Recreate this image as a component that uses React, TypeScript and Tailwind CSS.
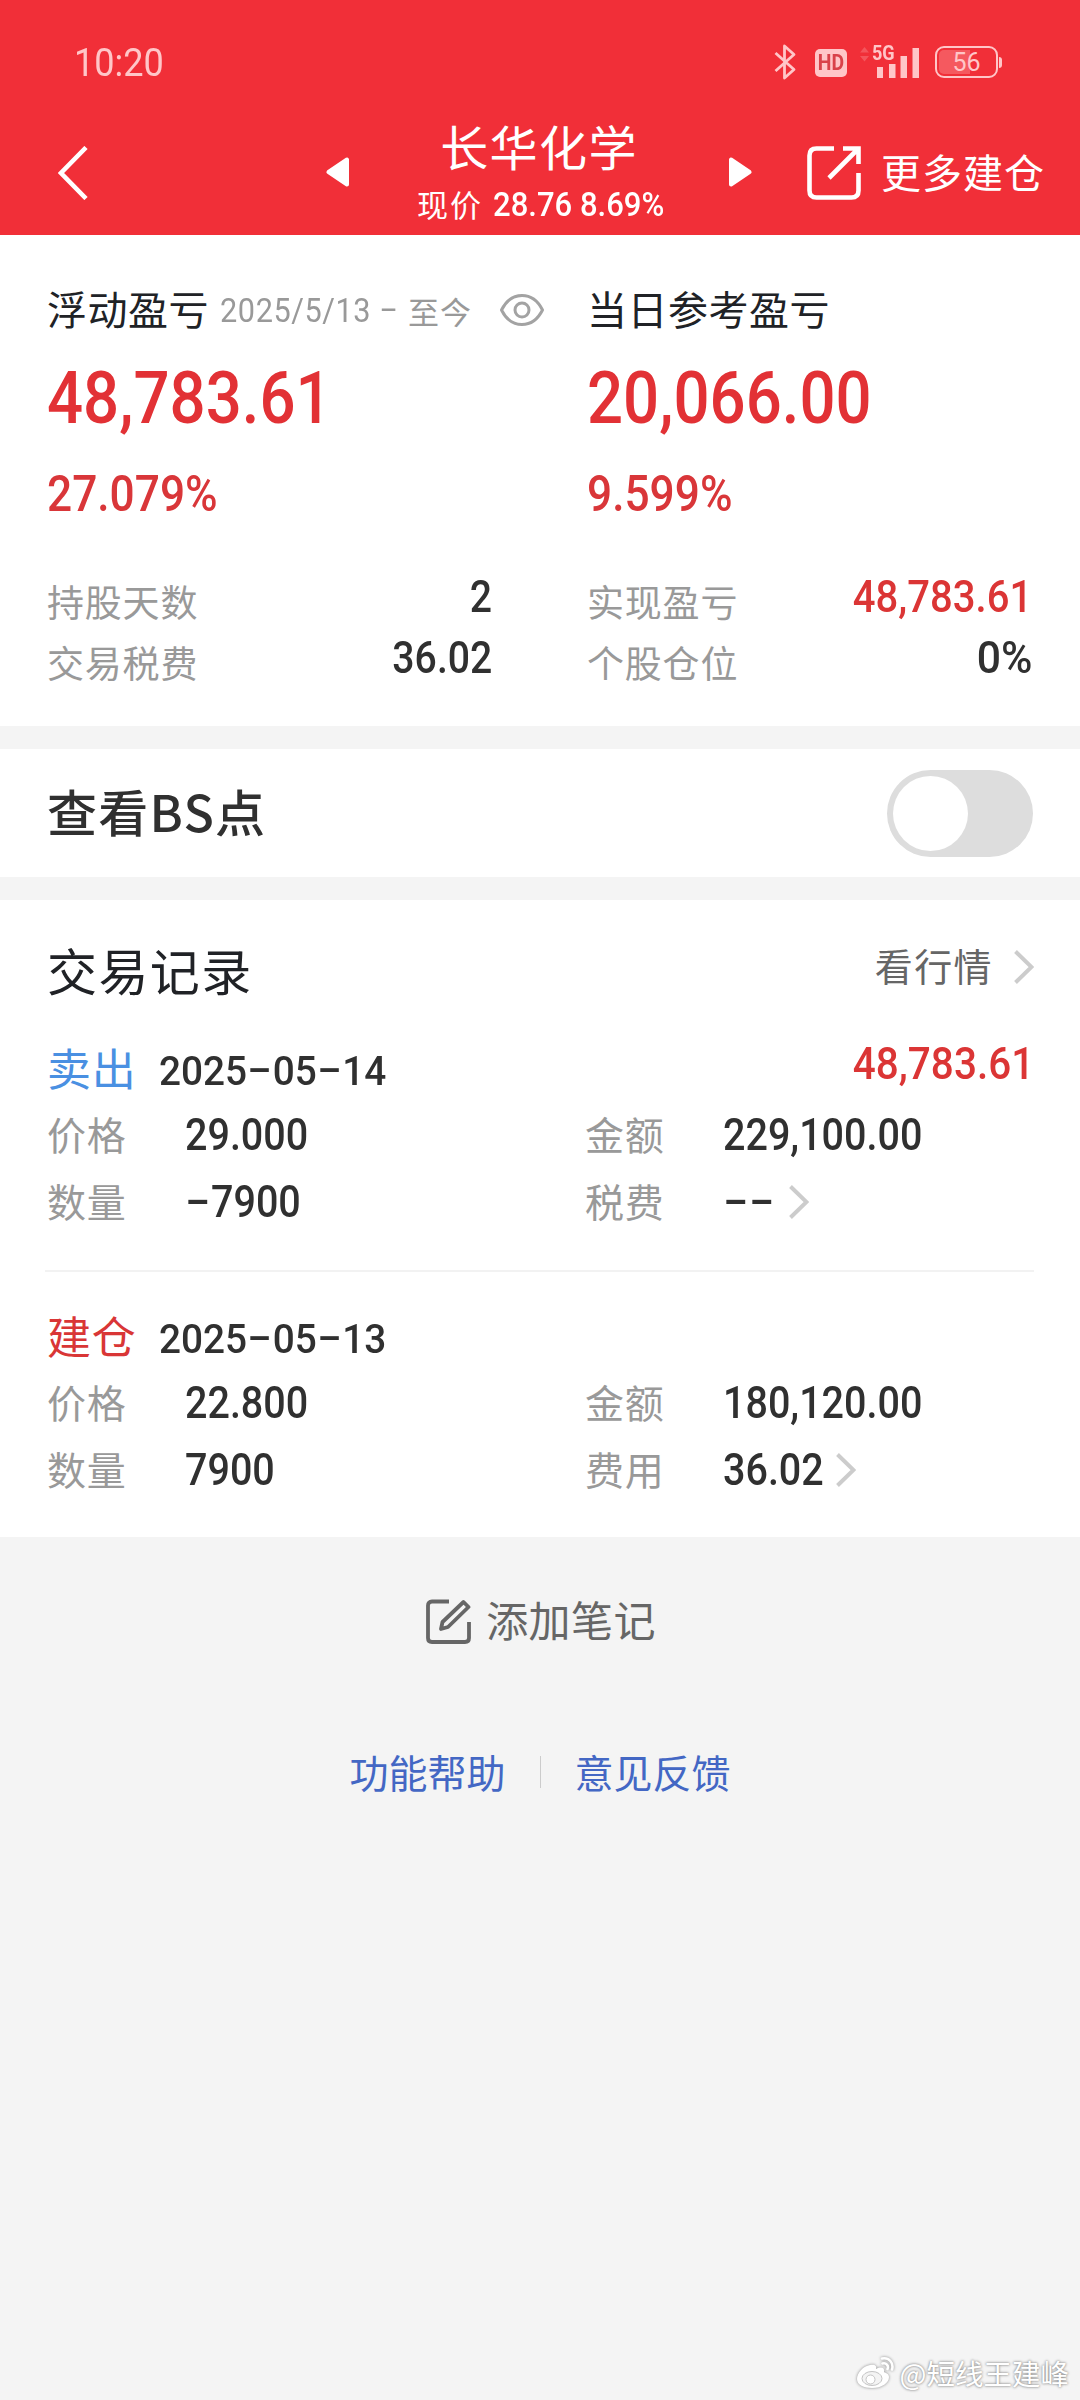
import React, { useState } from 'react';

const CJK = "font-['Noto_Sans_CJK_SC',sans-serif] whitespace-nowrap";
const NUM = "font-['Roboto','Noto_Sans_CJK_SC',sans-serif]";

interface TradeRecord {
  type: string;
  typeColor: string;
  date: string;
  profit?: string;
  price: string;
  quantity: string;
  amount: string;
  feeLabel: string;
  fee: string;
}

const records: TradeRecord[] = [
  {
    type: '卖出',
    typeColor: 'text-[#4a90e2]',
    date: '2025-05-14',
    profit: '48,783.61',
    price: '29.000',
    quantity: '-7900',
    amount: '229,100.00',
    feeLabel: '税费',
    fee: '--'
  },
  {
    type: '建仓',
    typeColor: 'text-[#d93636]',
    date: '2025-05-13',
    price: '22.800',
    quantity: '7900',
    amount: '180,120.00',
    feeLabel: '费用',
    fee: '36.02'
  }
];

// Condensed digits, with hyphens widened to a bit more than a digit
const Num = ({ text, className }: { text: string; className: string }) => (
  <span className={`${NUM} inline-block whitespace-pre leading-none ${className}`}>
    {text.split('').map((ch, i) =>
      ch === '-' ? (
        <span key={i} className="inline-block w-[0.66em] -translate-y-[0.05em] scale-x-[1.85] text-center">-</span>
      ) : (
        <React.Fragment key={i}>{ch}</React.Fragment>
      )
    )}
  </span>
);

const Chevron = () => (
  <svg className="shrink-0" width="20" height="34" viewBox="0 0 20 34" fill="none" stroke="#cccccc" strokeWidth="4">
    <path d="M1.5 1.5L17.5 17L1.5 32.5" />
  </svg>
);

const StatusBar = () => (
  <div className="flex h-[124px] items-center justify-between pl-[74px] pr-[78px] text-[#ffc6c8]">
    <span className={`${NUM} origin-left scale-x-[.95] pt-px text-[38px] leading-none`}>10:20</span>
    <div className="flex items-center">
      <svg width="22" height="36" viewBox="0 0 22 36" fill="none" stroke="currentColor" strokeWidth="2.8" strokeLinejoin="round">
        <path d="M1.5 9L20 25.5L10.5 34V2L20 10.5L1.5 27" />
      </svg>
      <span className="ml-[19px] mt-[2px] flex h-7 w-8 items-center justify-center rounded-[5px] bg-[#ffc6c8]">
        <span className={`${NUM} scale-x-[.88] text-[22px] font-bold leading-none text-[#d9424a]`}>HD</span>
      </span>
      <div className="relative ml-3 h-[34px] w-[62px]">
        <svg width="62" height="34" viewBox="0 0 62 34" fill="currentColor">
          <path d="M1 7.5L5.5 2L10 7.5ZM1 11L5.5 16.5L10 11Z" opacity=".25" />
          <rect x="18" y="22" width="6" height="11" />
          <rect x="30" y="19" width="6.5" height="14" />
          <rect x="41.5" y="11" width="6.5" height="22" />
          <rect x="53.5" y="3" width="6.5" height="30" />
        </svg>
        <span className={`${NUM} absolute left-[13px] top-[-2px] origin-left scale-x-[.86] text-[21px] font-bold leading-none`}>5G</span>
      </div>
      <div className="ml-[14px] flex items-center gap-px">
        <div className="flex h-8 w-[63px] items-center justify-center rounded-[9px] border-[2.5px] border-[#ffc6c8] bg-[linear-gradient(90deg,#f5595f_56%,transparent_56%)] bg-clip-content p-[2px]">
          <span className={`${NUM} text-[25px] leading-none`}>56</span>
        </div>
        <div className="h-[11px] w-[3px] rounded-r-sm bg-[#ffc6c8]" />
      </div>
    </div>
  </div>
);

const NavBar = () => (
  <div className="flex h-[111px] items-start text-white">
    <svg className="ml-[58px] mt-[22px]" width="30" height="54" viewBox="0 0 30 54" fill="none" stroke="currentColor" strokeWidth="4.6">
      <path d="M28 1.5L3 27L28 52.5" />
    </svg>
    <svg className="ml-[238px] mt-[33px]" width="24" height="30" viewBox="0 0 24 30" fill="currentColor" stroke="currentColor" strokeWidth="4" strokeLinejoin="round">
      <path d="M21 2.5V27.5L2.5 15Z" />
    </svg>
    <div className="flex w-[378px] flex-col items-center">
      <h1 className={`${CJK} mt-[-3px] text-[48px] leading-none tracking-[1.4px]`}>长华化学</h1>
      <div className="ml-[2px] mt-[18px] flex h-8 items-center">
        <span className={`${CJK} text-[31px] leading-none tracking-[2px]`}>现价</span>
        <Num text="28.76 8.69%" className="ml-[10px] mt-[2px] w-[170px] origin-left scale-x-[.94] text-[33px] font-medium" />
      </div>
    </div>
    <svg className="mt-[33px]" width="24" height="30" viewBox="0 0 24 30" fill="currentColor" stroke="currentColor" strokeWidth="4" strokeLinejoin="round">
      <path d="M3 2.5V27.5L21.5 15Z" />
    </svg>
    <svg className="ml-[55px] mt-[22px]" width="54" height="54" viewBox="0 0 54 54" fill="none" stroke="currentColor" strokeWidth="4.6">
      <path d="M27 2.5H9.5Q2.5 2.5 2.5 9.5V44.5Q2.5 51.5 9.5 51.5H44.5Q51.5 51.5 51.5 44.5V27" />
      <path d="M36 2.5H51.5V18M51 3L22 32" />
    </svg>
    <span className={`${CJK} ml-5 mt-[27px] text-[40px] leading-none tracking-[1px]`}>更多建仓</span>
  </div>
);

const DetailRow = ({ label, value, valueClass }: { label: string; value: string; valueClass: string }) => (
  <div className="flex h-[61px] items-center justify-between">
    <span className={`${CJK} pt-[10px] text-[37px] leading-none tracking-[0.8px] text-[#999999]`}>{label}</span>
    <Num text={value} className={`mt-px origin-right text-[44px] font-medium ${valueClass}`} />
  </div>
);

const Summary = () => (
  <section className="grid h-[491px] grid-cols-2 bg-white pt-[47px]">
    <div className="pl-[47px] pr-12">
      <div className="flex h-[52px] items-center">
        <span className={`${CJK} w-[173px] shrink-0 text-[40px] leading-none tracking-[0.5px] text-[#202226]`}>浮动盈亏</span>
        <Num text="2025/5/13 - " className="w-[188px] shrink-0 origin-left scale-x-[.93] pt-1 text-[33px] tracking-[0.6px] text-[#999999]" />
        <span className={`${CJK} pt-1 text-[31px] leading-none tracking-[1px] text-[#999999]`}>至今</span>
        <svg className="ml-[28px] mt-1 shrink-0" width="44" height="32" viewBox="0 0 44 32" fill="none" stroke="#a3a3a3" strokeWidth="3">
          <path d="M1.5 16C6 7 13 1.5 22 1.5S38 7 42.5 16C38 25 31 30.5 22 30.5S6 25 1.5 16Z" />
          <circle cx="22" cy="16" r="7" />
        </svg>
      </div>
      <div className="flex h-[128px] items-center text-[#e23135]">
        <Num text="48,783.61" className="mt-px origin-left scale-x-[.87] text-[73px] font-medium" />
      </div>
      <div className="flex h-[62px] items-center text-[#d93639]">
        <Num text="27.079%" className="mt-[2px] origin-left scale-x-[.885] text-[50px] font-medium" />
      </div>
      <div className="mt-[42px]">
        <DetailRow label="持股天数" value="2" valueClass="scale-x-[.89] text-[#303030]" />
        <DetailRow label="交易税费" value="36.02" valueClass="scale-x-[.89] text-[#303030]" />
      </div>
    </div>
    <div className="pl-[47px] pr-12">
      <div className="flex h-[52px] items-center">
        <span className={`${CJK} text-[40px] leading-none tracking-[0.5px] text-[#202226]`}>当日参考盈亏</span>
      </div>
      <div className="flex h-[128px] items-center text-[#e23135]">
        <Num text="20,066.00" className="mt-px origin-left scale-x-[.87] text-[73px] font-medium" />
      </div>
      <div className="flex h-[62px] items-center text-[#d93639]">
        <Num text="9.599%" className="mt-[2px] origin-left scale-x-[.885] text-[50px] font-medium" />
      </div>
      <div className="mt-[42px]">
        <DetailRow label="实现盈亏" value="48,783.61" valueClass="scale-x-[.91] text-[#db3535]" />
        <DetailRow label="个股仓位" value="0%" valueClass="scale-x-[.97] text-[#303030]" />
      </div>
    </div>
  </section>
);

const BsToggle = () => {
  const [enabled, setEnabled] = useState(false);

  return (
    <section className="mt-[23px] flex h-[128px] items-center justify-between bg-white px-[47px]">
      <span className={`${CJK} mt-[-6px] text-[50px] font-medium leading-none tracking-[1.3px] text-[#303030]`}>查看BS点</span>
      <button
        onClick={() => setEnabled(!enabled)}
        className={`flex h-[87px] w-[146px] items-center rounded-full px-[6px] ${enabled ? 'justify-end bg-[#f12f38]' : 'bg-[#dddddd]'}`}
      >
        <span className="h-[75px] w-[75px] rounded-full bg-white" />
      </button>
    </section>
  );
};

const Field = ({ label, value, arrow }: { label: string; value: string; arrow?: boolean }) => (
  <div className="flex items-center">
    <span className={`${CJK} w-[138px] text-[39px] leading-none tracking-[0.8px] text-[#999999]`}>{label}</span>
    <Num text={value} className="mt-[2px] origin-left scale-x-[.897] text-[44px] font-medium text-[#303030]" />
    {arrow && (
      <span className={`mt-[2px] ${value === '--' ? 'ml-2' : 'ml-px'}`}>
        <Chevron />
      </span>
    )}
  </div>
);

const RecordItem = ({ record }: { record: TradeRecord }) => (
  <div>
    <div className="flex h-[66px] items-center">
      <span className={`${CJK} w-[112px] text-[44px] leading-none tracking-[0.8px] ${record.typeColor}`}>{record.type}</span>
      <Num text={record.date} className="mt-[8px] origin-left scale-x-[.945] text-[41px] font-medium text-[#303030]" />
      {record.profit && (
        <Num text={record.profit} className="mb-[6px] ml-auto origin-right scale-x-[.92] text-[44px] font-medium text-[#db3535]" />
      )}
    </div>
    <div className="grid h-[134px] grid-cols-[538px_1fr] grid-rows-2">
      <Field label="价格" value={record.price} />
      <Field label="金额" value={record.amount} />
      <Field label="数量" value={record.quantity} />
      <Field label={record.feeLabel} value={record.fee} arrow />
    </div>
  </div>
);

const Records = () => (
  <section className="mt-[23px] h-[637px] bg-white pl-[47px] pr-[46px] pt-[33px]">
    <div className="flex h-[74px] items-center">
      <h2 className={`${CJK} mt-[-2px] text-[50px] leading-none tracking-[1.4px] text-[#202226]`}>交易记录</h2>
      <div className="mb-[11px] ml-auto flex items-center">
        <span className={`${CJK} mr-[21px] text-[38px] leading-none tracking-[1.4px] text-[#666666]`}>看行情</span>
        <span className="mt-[4px]">
          <Chevron />
        </span>
      </div>
    </div>
    <div className="mt-[27px]">
      <RecordItem record={records[0]} />
    </div>
    <div className="-ml-[2px] mt-[36px] h-[2px] bg-[#f2f2f2]" />
    <div className="mt-[30px]">
      <RecordItem record={records[1]} />
    </div>
  </section>
);

const Footer = () => (
  <footer className="flex flex-1 flex-col items-center pt-[56px]">
    <button className="ml-[2px] flex items-center text-[#666666]">
      <svg className="mt-[6px]" width="45" height="45" viewBox="0 0 45 45" fill="none" stroke="currentColor" strokeWidth="3.8">
        <path d="M23 2.5H6Q2 2.5 2 6.5V39Q2 43 6 43H39Q43 43 43 39V23" />
        <path d="M37.5 3L42.5 8L22 28L15 30L16.5 23Z" strokeLinejoin="round" />
      </svg>
      <span className={`${CJK} ml-[15px] text-[42px] leading-none tracking-[0.4px]`}>添加笔记</span>
    </button>
    <div className="mt-[108px] flex items-center text-[#4367c4]">
      <a className={`${CJK} text-[39px] leading-none`}>功能帮助</a>
      <span className="mx-[34px] h-8 w-px bg-[#cccccc]" />
      <a className={`${CJK} text-[39px] leading-none`}>意见反馈</a>
    </div>
    <div className="mb-[10px] ml-auto mr-[11px] mt-auto flex items-center">
      <svg className="drop-shadow-[0_0_1.5px_#888888]" width="40" height="34" viewBox="0 0 40 34" fill="none">
        <path d="M15 9C8 10 2 17 2 23C2 29 9 32 17 32C27 32 34 27 34 21C34 18 31 17 29 16C30 12 27 10 21 13C22 10 20 8 15 9Z" fill="white" />
        <ellipse cx="17" cy="22.5" rx="10" ry="7" fill="#f4f4f4" stroke="#c4c4c4" />
        <circle cx="15.5" cy="23.5" r="4.5" fill="white" stroke="#c4c4c4" />
        <path d="M27 2.5C34 1 39 7 37 13.5M27.5 7.5C31 6.5 34 9.5 32.5 13" stroke="white" strokeWidth="2.6" strokeLinecap="round" />
      </svg>
      <span className={`${CJK} ml-[5px] text-[28.5px] leading-none text-white [text-shadow:0_0_3px_#888888,0_0_2px_#aaaaaa]`}>@短线王建峰</span>
    </div>
  </footer>
);

const App: React.FC = () => {
  return (
    <div className="flex h-[2400px] w-[1080px] flex-col overflow-hidden bg-[#f4f4f4]">
      <header className="h-[235px] bg-[#f12f38]">
        <StatusBar />
        <NavBar />
      </header>
      <Summary />
      <BsToggle />
      <Records />
      <Footer />
    </div>
  );
};

export default App;
